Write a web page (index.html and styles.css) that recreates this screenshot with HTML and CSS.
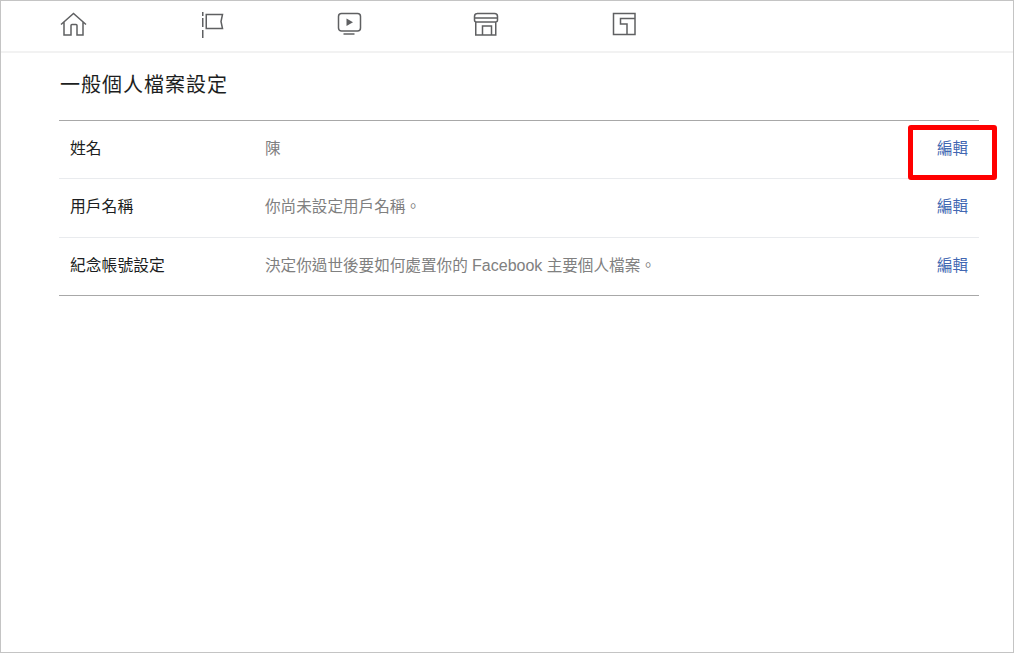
FILE: index.html
```html
<!DOCTYPE html>
<html lang="zh-Hant">
<head>
    <meta charset="UTF-8">
    <meta name="viewport" content="width=device-width, initial-scale=1.0">
    <title>一般個人檔案設定</title>
    <link rel="stylesheet" href="styles.css">
</head>
<body>
    <div class="frame">
        <nav class="top-nav">
            <a class="nav-icon" href="#">
                <svg width="28" height="28" viewBox="0 0 28 28"><path d="M2 13.500 14.500 2.500 27 13.500M5 11v13h7v-9.500q0-1 1-1h4q1 0 1 1V24h6V11"/></svg>
            </a>
            <a class="nav-icon" href="#">
                <svg width="28" height="28" viewBox="0 0 28 28"><path d="M5.750 1v4M5.750 7v9M5.750 19v8M9.250 3.500H25.500l-1.500 7 1.500 7H9.250z"/></svg>
            </a>
            <a class="nav-icon" href="#">
                <svg width="28" height="28" viewBox="0 0 28 28"><rect x="3.500" y="2.500" width="22" height="17.500" rx="3"/><path d="M8.500 23h11"/><path class="solid" d="M11.500 7.500v7.500l6.500-3.750z"/></svg>
            </a>
            <a class="nav-icon" href="#">
                <svg width="28" height="28" viewBox="0 0 28 28"><path d="M5 2.500h17.500q3 0 3 3V9q0 2-2 2h-19q-2 0-2-2V5.500q0-3 3-3zM2 7h23.500M3.750 11v13h20V11M10.500 24v-9h9v9"/></svg>
            </a>
            <a class="nav-icon" href="#">
                <svg width="28" height="28" viewBox="0 0 28 28"><path d="M3.500 2.500H25v21H3.500zM25 7.500H10.500V13h6.500v10.500"/></svg>
            </a>
        </nav>

        <main class="content">
            <h1>一般個人檔案設定</h1>
            <div class="settings">
                <div class="row">
                    <div class="row-label">姓名</div>
                    <div class="row-value">陳</div>
                    <a class="edit-link" href="#">編輯</a>
                    <div class="highlight-box"></div>
                </div>
                <div class="row">
                    <div class="row-label">用戶名稱</div>
                    <div class="row-value">你尚未設定用戶名稱。</div>
                    <a class="edit-link" href="#">編輯</a>
                </div>
                <div class="row">
                    <div class="row-label">紀念帳號設定</div>
                    <div class="row-value">決定你過世後要如何處置你的 <span class="latin">Facebook</span> 主要個人檔案。</div>
                    <a class="edit-link" href="#">編輯</a>
                </div>
            </div>
        </main>
    </div>
</body>
</html>
```

FILE: styles.css
```css
html, body {
    margin: 0;
    padding: 0;
    background-color: #fff;
}

body {
    font-family: "Liberation Sans", "Noto Sans CJK TC", sans-serif;
}

.frame {
    box-sizing: border-box;
    height: 653px;
    border: 1px solid #c4c4c4;
    overflow: hidden;
}

.top-nav {
    display: flex;
    height: 50px;
    padding-left: 58px;
    border-bottom: 2px solid #f2f2f2;
}

.nav-icon {
    width: 137.750px;
    padding-top: 10px;
}

.nav-icon svg {
    display: block;
    fill: none;
    stroke: #5f6062;
    stroke-width: 1.500;
}

.nav-icon svg .solid {
    fill: #5f6062;
    stroke: none;
}

.content {
    padding: 0 34px 0 58px;
}

h1 {
    margin: 0;
    padding: 19px 0 0 1px;
    height: 48px;
    font-size: 20px;
    line-height: 26px;
    font-weight: 400;
    letter-spacing: 1px;
    color: #1c1e21;
}

.settings {
    border-top: 1px solid #a8a8a8;
    border-bottom: 1px solid #a8a8a8;
}

.row {
    position: relative;
    display: flex;
    align-items: center;
    box-sizing: border-box;
    height: 57px;
    padding: 0 11px 5px;
    font-size: 15.500px;
}

.row + .row {
    height: 59px;
    padding-bottom: 6px;
    border-top: 1px solid #e9ebee;
}

.row + .row + .row {
    height: 58px;
    padding-bottom: 5px;
}

.row-label {
    width: 195px;
    font-size: 15.800px;
    color: #1c1e21;
}

.row-value {
    flex: 1;
    font-size: 15.600px;
    color: #808080;
}

.latin {
    font-size: 16px;
}

.edit-link {
    color: #4267b2;
    text-decoration: none;
}

/* рамка поверх строки, линия следующей строки не должна её пересекать */
.highlight-box {
    position: absolute;
    z-index: 1;
    top: 4px;
    right: -18px;
    box-sizing: border-box;
    width: 89px;
    height: 55px;
    border: 5px solid #f00;
    border-radius: 3px;
}
```
